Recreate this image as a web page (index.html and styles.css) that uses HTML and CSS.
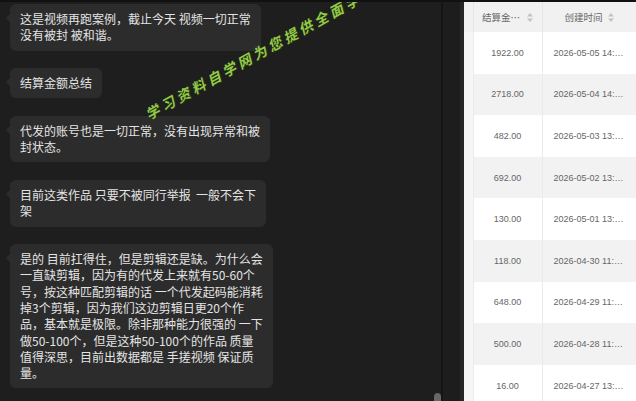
FILE: index.html
```html
<!DOCTYPE html>
<html lang="zh-CN">
<head>
    <meta charset="UTF-8">
    <meta name="viewport" content="width=device-width, initial-scale=1.0">
    <title>结算记录</title>
    <link rel="stylesheet" href="styles.css">
</head>
<body>
    <div class="app">
        <div class="chat">
            <div class="bubble">这是视频再跑案例，截止今天 视频一切正常<br>没有被封 被和谐。</div>
            <div class="bubble">结算金额总结</div>
            <div class="bubble">代发的账号也是一切正常，没有出现异常和被<br>封状态。</div>
            <div class="bubble">目前这类作品 只要不被同行举报  一般不会下<br>架</div>
            <div class="bubble">是的 目前扛得住，但是剪辑还是缺。为什么会<br>一直缺剪辑，因为有的代发上来就有50-60个<br>号，按这种匹配剪辑的话 一个代发起码能消耗<br>掉3个剪辑，因为我们这边剪辑日更20个作<br>品，基本就是极限。除非那种能力很强的 一下<br>做50-100个，但是这种50-100个的作品 质量<br>值得深思，目前出数据都是 手搓视频 保证质<br>量。</div>
            <div class="watermark">学习资料自学网为您提供全面学习资料</div>
            <div class="scroll-thumb"></div>
        </div>
        <div class="gutter"></div>
        <div class="table-wrap">
            <table class="records">
                <colgroup>
                    <col class="c-sel">
                    <col class="c-amount">
                    <col class="c-time">
                </colgroup>
                <thead>
                    <tr>
                        <th class="sel"></th>
                        <th>
                            <div class="th-inner">
                                <span class="th-label">结算金额(元)</span>
                                <svg class="sort" width="6" height="9" viewBox="0 0 6 9"><path d="M3 0L6 3.5H0Z"/><path d="M0 5.5H6L3 9Z"/></svg>
                            </div>
                        </th>
                        <th>
                            <div class="th-inner">
                                <span class="th-label">创建时间</span>
                                <svg class="sort" width="6" height="9" viewBox="0 0 6 9"><path d="M3 0L6 3.5H0Z"/><path d="M0 5.5H6L3 9Z"/></svg>
                            </div>
                        </th>
                    </tr>
                </thead>
                <tbody>
                    <tr><td class="sel"></td><td class="amount">1922.00</td><td class="time">2026-05-05 14:32:18</td></tr>
                    <tr><td class="sel"></td><td class="amount">2718.00</td><td class="time">2026-05-04 14:21:05</td></tr>
                    <tr><td class="sel"></td><td class="amount">482.00</td><td class="time">2026-05-03 13:47:52</td></tr>
                    <tr><td class="sel"></td><td class="amount">692.00</td><td class="time">2026-05-02 13:15:40</td></tr>
                    <tr><td class="sel"></td><td class="amount">130.00</td><td class="time">2026-05-01 13:08:26</td></tr>
                    <tr><td class="sel"></td><td class="amount">118.00</td><td class="time">2026-04-30 11:56:13</td></tr>
                    <tr><td class="sel"></td><td class="amount">648.00</td><td class="time">2026-04-29 11:42:09</td></tr>
                    <tr><td class="sel"></td><td class="amount">500.00</td><td class="time">2026-04-28 11:30:47</td></tr>
                    <tr><td class="sel"></td><td class="amount">16.00</td><td class="time">2026-04-27 13:19:34</td></tr>
                </tbody>
            </table>
        </div>
    </div>
</body>
</html>
```

FILE: styles.css
```css
body {
    margin: 0;
    background-color: #1c1c1c;
    font-family: "Noto Sans CJK SC", "Noto Sans", sans-serif;
    overflow: hidden;
}
.app {
    display: flex;
    height: 399px;
    border-top: 2px solid #111;
    overflow: hidden;
}
.chat {
    position: relative;
    width: 431px;
    flex-shrink: 0;
    padding: 2px 0 0 10px;
    background-color: #1e1e1e;
    display: flex;
    flex-direction: column;
    align-items: flex-start;
    gap: 17.5px;
    overflow: hidden;
}
.bubble {
    position: relative;
    background-color: #2c2c2c;
    color: #e4e4e4;
    font-size: 12px;
    line-height: 16.3px;
    padding: 7px 10px;
    border-radius: 6px;
    white-space: pre-wrap;
}
.bubble::before {
    content: "";
    position: absolute;
    left: -4px;
    top: 10px;
    border-top: 4px solid transparent;
    border-bottom: 4px solid transparent;
    border-right: 4px solid #2c2c2c;
}
.watermark {
    position: absolute;
    left: 146px;
    top: 105px;
    transform-origin: left center;
    transform: rotate(-29deg);
    color: #93c848;
    font-size: 14px;
    line-height: 16px;
    font-weight: bold;
    font-style: italic;
    letter-spacing: 3.5px;
    white-space: nowrap;
    text-shadow: 1px 1px 0 #203010;
}
.scroll-thumb {
    position: absolute;
    right: 0;
    bottom: -6px;
    width: 7px;
    height: 14px;
    border-radius: 4px;
    background-color: #676767;
}
.gutter {
    width: 17px;
    flex-shrink: 0;
    background-color: #1d1d1d;
    border-left: 2px solid #151515;
    border-right: 4px solid #262626;
}
.table-wrap {
    flex: 1;
    background-color: #fff;
}
.records {
    width: 172px;
    table-layout: fixed;
    border-collapse: collapse;
    font-family: "Liberation Sans", Arial, sans-serif;
    color: #666;
}
.c-sel {
    width: 9px;
}
.c-amount {
    width: 69px;
}
.c-time {
    width: 94px;
}
.records th {
    height: 30px;
    padding: 0;
    background-color: #f1f1f1;
    font-family: "Noto Sans CJK SC", sans-serif;
    font-size: 9.5px;
    font-weight: normal;
    color: #666;
    border-right: 1px solid #e6e6e6;
}
.th-inner {
    display: flex;
    justify-content: center;
    align-items: center;
    gap: 5px;
}
.th-label {
    max-width: 40px;
    overflow: hidden;
    white-space: nowrap;
    text-overflow: ellipsis;
}
.sort {
    fill: #c2c2c2;
    flex-shrink: 0;
}
.records td {
    height: 41.6px;
    padding: 0;
    font-size: 9px;
    border-right: 1px solid #ebebeb;
    white-space: nowrap;
    overflow: hidden;
}
.records tbody tr:nth-child(even) {
    background-color: #f2f2f2;
}
.records td.sel {
    background-color: #f6f6f6;
}
.records td.amount {
    text-align: center;
}
.records td.time {
    padding: 0 11px;
    text-overflow: ellipsis;
}
```
